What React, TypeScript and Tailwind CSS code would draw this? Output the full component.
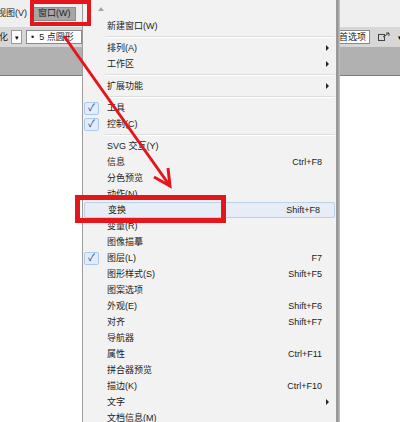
type Item = {
    label?: string;
    shortcut?: string;
    sub?: boolean;
    checked?: boolean;
    sep?: boolean;
    active?: boolean;
};

const items: Item[] = [
    { label: "新建窗口(W)" },
    { sep: true },
    { label: "排列(A)", sub: true },
    { label: "工作区", sub: true },
    { sep: true },
    { label: "扩展功能", sub: true },
    { sep: true },
    { label: "工具", checked: true },
    { label: "控制(C)", checked: true },
    { sep: true },
    { label: "SVG 交互(Y)" },
    { label: "信息", shortcut: "Ctrl+F8" },
    { label: "分色预览" },
    { label: "动作(N)" },
    { label: "变换", shortcut: "Shift+F8", active: true },
    { label: "变量(R)" },
    { label: "图像描摹" },
    { label: "图层(L)", shortcut: "F7", checked: true },
    { label: "图形样式(S)", shortcut: "Shift+F5" },
    { label: "图案选项" },
    { label: "外观(E)", shortcut: "Shift+F6" },
    { label: "对齐", shortcut: "Shift+F7" },
    { label: "导航器" },
    { label: "属性", shortcut: "Ctrl+F11" },
    { label: "拼合器预览" },
    { label: "描边(K)", shortcut: "Ctrl+F10" },
    { label: "文字", sub: true },
    { label: "文档信息(M)" },
];

function Row({ item }: { item: Item }) {
    if (item.sep) {
        return (
            <div className="h-[6px] flex flex-col justify-center pl-[22px] pr-[1px]">
                <div className="h-px bg-[#dcdcdc]" />
                <div className="h-px bg-white" />
            </div>
        );
    }
    return (
        <div className={`h-[16px] flex items-center ${item.active ? "bg-[#e6edf6] border border-[#bcd0e6] rounded-[2px] mx-[1px]" : ""}`}>
            <div className={`${item.active ? "w-[23px]" : "w-[24px]"} h-full flex items-center pl-[1px]`}>
                {item.checked && (
                    <div className="w-[15px] h-[13px] bg-[#e3ecf9] border border-[#a9c8ee] rounded-[2px] flex items-center justify-center text-[10px] text-[#1d3f7a] leading-none">
                        ✓
                    </div>
                )}
            </div>
            <div className="flex-1 text-[#1c1c1c] whitespace-nowrap">{item.label}</div>
            <div className="text-[#1c1c1c] whitespace-nowrap">{item.shortcut}</div>
            <div className="w-[14px] h-full flex items-center pl-[4px]">
                {item.sub && (
                    <div className="w-0 h-0 border-y-[3px] border-y-transparent border-l-[3px] border-l-[#222]" />
                )}
            </div>
        </div>
    );
}

export default function App() {
    return (
        <div
            className="relative w-[400px] h-[422px] overflow-hidden bg-white text-[9px] leading-none"
            style={{ fontFamily: '"Liberation Sans", "Noto Sans CJK SC", sans-serif' }}
        >
            {/* menubar */}
            <div className="h-[27px] bg-[#efefef] flex items-center">
                <span className="ml-[-3px] text-[#222]">视图(V)</span>
                <div className="ml-[6px] h-[14px] px-[4px] flex items-center bg-[#a6a6a6] border border-[#8d8d8d] text-[#222]">
                    窗口(W)
                </div>
            </div>
            {/* control bar */}
            <div className="h-[20px] bg-[#d7d7d7] flex items-center gap-[3px]">
                <span className="ml-[-1px] text-[#222]">化</span>
                <div className="w-[11px] h-[14px] bg-white border border-[#9a9a9a] flex items-center justify-center text-[7px]">▾</div>
                <div className="ml-[1px] w-[56px] h-[14px] bg-white border border-[#8a8a8a] flex items-center pl-[4px] gap-[5px] text-[#222]">
                    <span>•</span><span>5 点圆形</span>
                </div>
                <div className="ml-auto w-[40px] h-[14px] bg-white border border-[#8a8a8a] flex items-center justify-end pr-[3px] text-[#222]">
                    首选项
                </div>
                <div className="w-[22px] flex items-center justify-center gap-[2px] text-[#333]">
                    <svg width="12" height="10" viewBox="0 0 12 10">
                        <rect x="0.5" y="2.5" width="6" height="6" fill="none" stroke="#444" />
                        <path d="M5 5 L11 1 M8 1 H11 V4" stroke="#444" fill="none" />
                    </svg>
                </div>
                <span className="text-[7px] mr-[-2px]">▾</span>
            </div>
            {/* gray band */}
            <div className="h-[29px] bg-[#b1b1b1] border-b border-[#7c7c7c]" />

            {/* dropdown menu */}
            <div className="absolute left-[82px] top-0 w-[258px] h-[440px] flex">
                <div className="w-[255px] bg-[#f2f2f2] border-l border-r border-[#9c9c9c]">
                    <div className="h-[18px] flex items-center pl-[15px]">
                        <div className="w-0 h-0 border-x-[3px] border-x-transparent border-b-[4px] border-b-[#a6a6a6]" />
                    </div>
                    {items.map((it, i) => (
                        <Row key={i} item={it} />
                    ))}
                </div>
                <div className="w-[3px] bg-gradient-to-r from-[#8a8a8a] to-[#c8c8c8]" />
            </div>

            {/* red annotations */}
            <div className="absolute left-[30px] top-0 w-[61px] h-[26px] border-[4px] border-[#e4161c]" />
            <div className="absolute left-[75px] top-[195px] w-[151px] h-[28px] border-[5px] border-[#e4161c]" />
            <svg className="absolute left-0 top-0" width="400" height="422" viewBox="0 0 400 422">
                <line x1="64" y1="36" x2="170" y2="186" stroke="#e4161c" strokeWidth="3" />
                <polyline points="154,177 170,186 168,168" fill="none" stroke="#e4161c" strokeWidth="3" strokeLinejoin="miter" />
            </svg>
        </div>
    );
}
